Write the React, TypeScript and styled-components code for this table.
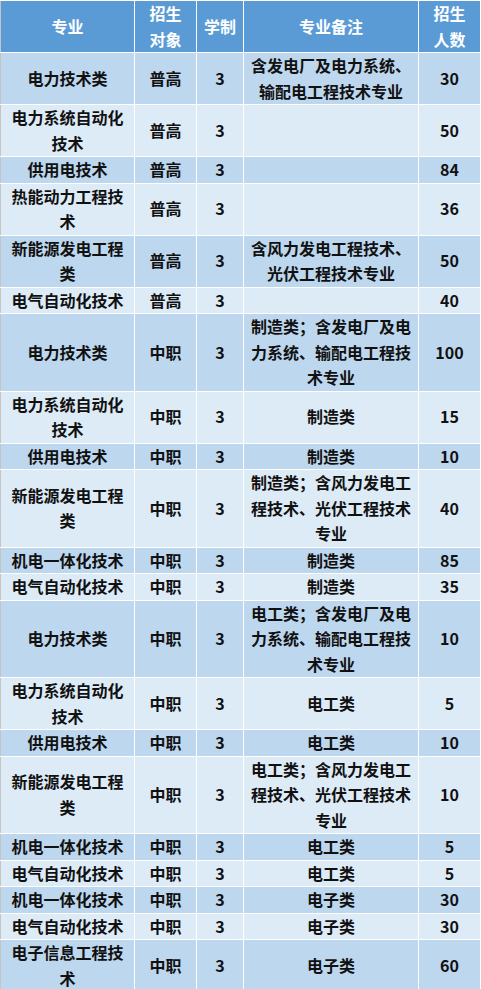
import React, { ReactElement } from 'react';
import styled, { createGlobalStyle } from 'styled-components';

const GlobalStyle = createGlobalStyle`
  body {
    margin: 0;
    background: #ffffff;
    font-family: 'Noto Sans CJK SC', 'Noto Sans', sans-serif;
  }
`;

const Table = styled.table`
  width: 481px;
  border-collapse: collapse;
  table-layout: fixed;
  border-left: 1px solid #c4c4c4;
  font-size: 16px;
  line-height: 25.5px;
`;

const Column = styled.col<{ $width: number }>`
  width: ${(p) => p.$width}px;
`;

const HeadCell = styled.th<{ $pad?: number }>`
  box-sizing: border-box;
  background: #5b9bd5;
  color: #ffffff;
  font-weight: 700;
  text-align: center;
  vertical-align: middle;
  padding: 0 ${(p) => p.$pad ?? 4}px;
  border: 1px solid #ffffff;
  border-left: none;
  word-break: break-all;
`;

const Row = styled.tr<{ $dark: boolean }>`
  background: ${(p) => (p.$dark ? '#bdd7ee' : '#ddebf7')};
`;

const Cell = styled.td<{ $pad?: number }>`
  box-sizing: border-box;
  color: #111111;
  font-weight: 700;
  text-align: center;
  vertical-align: middle;
  padding: 0 ${(p) => p.$pad ?? 4}px;
  border: 1px solid #ffffff;
  border-left: none;
  word-break: break-all;
`;

type Item = [string, string, string, string, string];

const rows: Item[] = [
  ['电力技术类', '普高', '3', '含发电厂及电力系统、输配电工程技术专业', '30'],
  ['电力系统自动化技术', '普高', '3', '', '50'],
  ['供用电技术', '普高', '3', '', '84'],
  ['热能动力工程技术', '普高', '3', '', '36'],
  ['新能源发电工程类', '普高', '3', '含风力发电工程技术、光伏工程技术专业', '50'],
  ['电气自动化技术', '普高', '3', '', '40'],
  ['电力技术类', '中职', '3', '制造类；含发电厂及电力系统、输配电工程技术专业', '100'],
  ['电力系统自动化技术', '中职', '3', '制造类', '15'],
  ['供用电技术', '中职', '3', '制造类', '10'],
  ['新能源发电工程类', '中职', '3', '制造类；含风力发电工程技术、光伏工程技术专业', '40'],
  ['机电一体化技术', '中职', '3', '制造类', '85'],
  ['电气自动化技术', '中职', '3', '制造类', '35'],
  ['电力技术类', '中职', '3', '电工类；含发电厂及电力系统、输配电工程技术专业', '10'],
  ['电力系统自动化技术', '中职', '3', '电工类', '5'],
  ['供用电技术', '中职', '3', '电工类', '10'],
  ['新能源发电工程类', '中职', '3', '电工类；含风力发电工程技术、光伏工程技术专业', '10'],
  ['机电一体化技术', '中职', '3', '电工类', '5'],
  ['电气自动化技术', '中职', '3', '电工类', '5'],
  ['机电一体化技术', '中职', '3', '电子类', '30'],
  ['电气自动化技术', '中职', '3', '电子类', '30'],
  ['电子信息工程技术', '中职', '3', '电子类', '60'],
];

const App = (): ReactElement => {
  return (
    <>
      <GlobalStyle />
      <Table>
        <colgroup>
          <Column $width={134} />
          <Column $width={62} />
          <Column $width={47} />
          <Column $width={175} />
          <Column $width={62} />
        </colgroup>
        <thead>
          <tr>
            <HeadCell>专业</HeadCell>
            <HeadCell $pad={9}>招生对象</HeadCell>
            <HeadCell $pad={2}>学制</HeadCell>
            <HeadCell>专业备注</HeadCell>
            <HeadCell $pad={9}>招生人数</HeadCell>
          </tr>
        </thead>
        <tbody>
          {rows.map((r, i) => (
            <Row key={i} $dark={i % 2 === 0}>
              <Cell $pad={6}>{r[0]}</Cell>
              <Cell>{r[1]}</Cell>
              <Cell>{r[2]}</Cell>
              <Cell>{r[3]}</Cell>
              <Cell>{r[4]}</Cell>
            </Row>
          ))}
        </tbody>
      </Table>
    </>
  );
};

export default App;
